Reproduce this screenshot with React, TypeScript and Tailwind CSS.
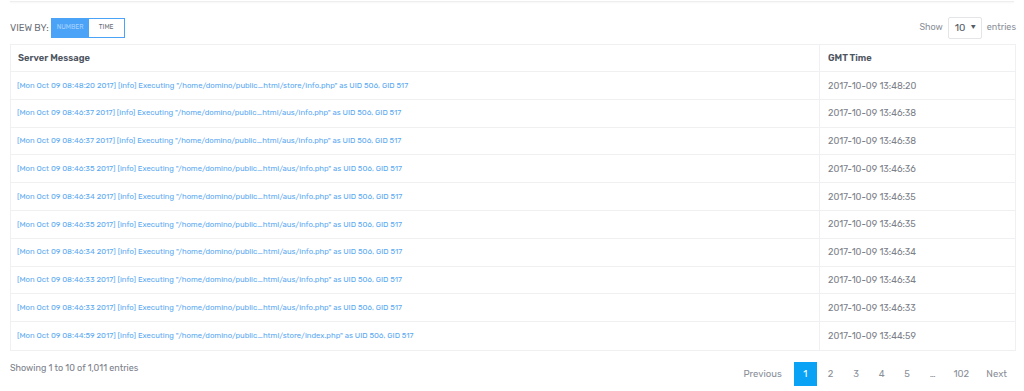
import React from "react";

type LogRow = {
	message: string;
	time: string;
};

const rows: LogRow[] = [
	{ message: '[Mon Oct 09 08:48:20 2017] [info] Executing "/home/domino/public_html/store/info.php" as UID 506, GID 517', time: "2017-10-09 13:48:20" },
	{ message: '[Mon Oct 09 08:46:37 2017] [info] Executing "/home/domino/public_html/aus/info.php" as UID 506, GID 517', time: "2017-10-09 13:46:38" },
	{ message: '[Mon Oct 09 08:46:37 2017] [info] Executing "/home/domino/public_html/aus/info.php" as UID 506, GID 517', time: "2017-10-09 13:46:38" },
	{ message: '[Mon Oct 09 08:46:35 2017] [info] Executing "/home/domino/public_html/aus/info.php" as UID 506, GID 517', time: "2017-10-09 13:46:36" },
	{ message: '[Mon Oct 09 08:46:34 2017] [info] Executing "/home/domino/public_html/aus/info.php" as UID 506, GID 517', time: "2017-10-09 13:46:35" },
	{ message: '[Mon Oct 09 08:46:35 2017] [info] Executing "/home/domino/public_html/aus/info.php" as UID 506, GID 517', time: "2017-10-09 13:46:35" },
	{ message: '[Mon Oct 09 08:46:34 2017] [info] Executing "/home/domino/public_html/aus/info.php" as UID 506, GID 517', time: "2017-10-09 13:46:34" },
	{ message: '[Mon Oct 09 08:46:33 2017] [info] Executing "/home/domino/public_html/aus/info.php" as UID 506, GID 517', time: "2017-10-09 13:46:34" },
	{ message: '[Mon Oct 09 08:46:33 2017] [info] Executing "/home/domino/public_html/aus/info.php" as UID 506, GID 517', time: "2017-10-09 13:46:33" },
	{ message: '[Mon Oct 09 08:44:59 2017] [info] Executing "/home/domino/public_html/store/index.php" as UID 506, GID 517', time: "2017-10-09 13:44:59" },
];

const pages = ["1", "2", "3", "4", "5", "…", "102"];

function ViewByToggle() {
	return (
		<div className="flex items-center gap-[2px]">
			<span className="text-[9.5px] text-[#6b6f78] uppercase">View by:</span>
			<div className="flex h-[20px] border border-[#4aa3f7] bg-white">
				<button className="w-[37px] bg-[#4aa3f7] text-[6.5px] text-[#a9d4ff] uppercase">
					Number
				</button>
				<button className="w-[35px] text-[6.5px] text-[#6b6f78] uppercase">
					Time
				</button>
			</div>
		</div>
	);
}

function EntriesSelect() {
	return (
		<div className="flex items-center gap-[5px] text-[9px] text-[#8a8f98]">
			<span>Show</span>
			<div className="flex h-[22px] w-[34px] items-center justify-between rounded-[2px] border border-[#e3e5e8] pl-[6px] pr-[5px] text-[#555a63]">
				<span className="text-[10px]">10</span>
				<span className="text-[5px]">▼</span>
			</div>
			<span>entries</span>
		</div>
	);
}

function Pagination() {
	return (
		<div className="flex items-center text-[9.5px] text-[#8a8f98]">
			<span className="mr-[11px]">Previous</span>
			{pages.map((page, index) => (
				<span
					key={index}
					className={
						page === "1"
							? "flex h-[24px] w-[23px] items-center justify-center mx-[1px] bg-[#0aa2f5] text-white"
							: page === "102"
								? "flex h-[24px] w-[32px] items-center justify-center"
								: "flex h-[24px] w-[25.5px] items-center justify-center"
					}
				>
					{page}
				</span>
			))}
			<span className="ml-[9px] mr-[17px]">Next</span>
		</div>
	);
}

export default function App() {
	return (
		<div className="h-[391px] w-[1024px] overflow-hidden bg-white font-['Rubik','Inter',sans-serif]">
			<div className="mx-[10px] h-[2px] border-b border-[#eceef0] shadow-[0_1px_2px_rgba(0,0,0,0.04)]" />

			<div className="flex items-center justify-between pl-[10px] pr-[8px] pt-[15px]">
				<ViewByToggle />
				<EntriesSelect />
			</div>

			<div className="ml-[10px] mr-[8px] mt-[5px] border border-[#eef0f2]">
				<div className="flex h-[27px] border-b border-[#eef0f2] text-[9.3px] font-semibold text-[#4e5561]">
					<div className="flex w-[809px] items-center border-r border-[#eef0f2] pl-[7px]">
						Server Message
					</div>
					<div className="flex flex-1 items-center pl-[8px]">GMT Time</div>
				</div>
				{rows.map((row, index) => (
					<div
						key={index}
						className={
							index === rows.length - 1
								? "flex h-[27.8px]"
								: "flex h-[27.8px] border-b border-[#eef0f2]"
						}
					>
						<div className="flex w-[809px] items-center border-r border-[#eef0f2] pl-[6px] text-[7.7px] text-[#5aa9f2]">
							{row.message}
						</div>
						<div className="flex flex-1 items-center pl-[8px] text-[9.2px] text-[#7c8089]">
							{row.time}
						</div>
					</div>
				))}
			</div>

			<div className="flex items-start justify-between pl-[10px] pt-[11px]">
				<span className="text-[9px] text-[#7c8089]">Showing 1 to 10 of 1,011 entries</span>
				<Pagination />
			</div>
		</div>
	);
}
